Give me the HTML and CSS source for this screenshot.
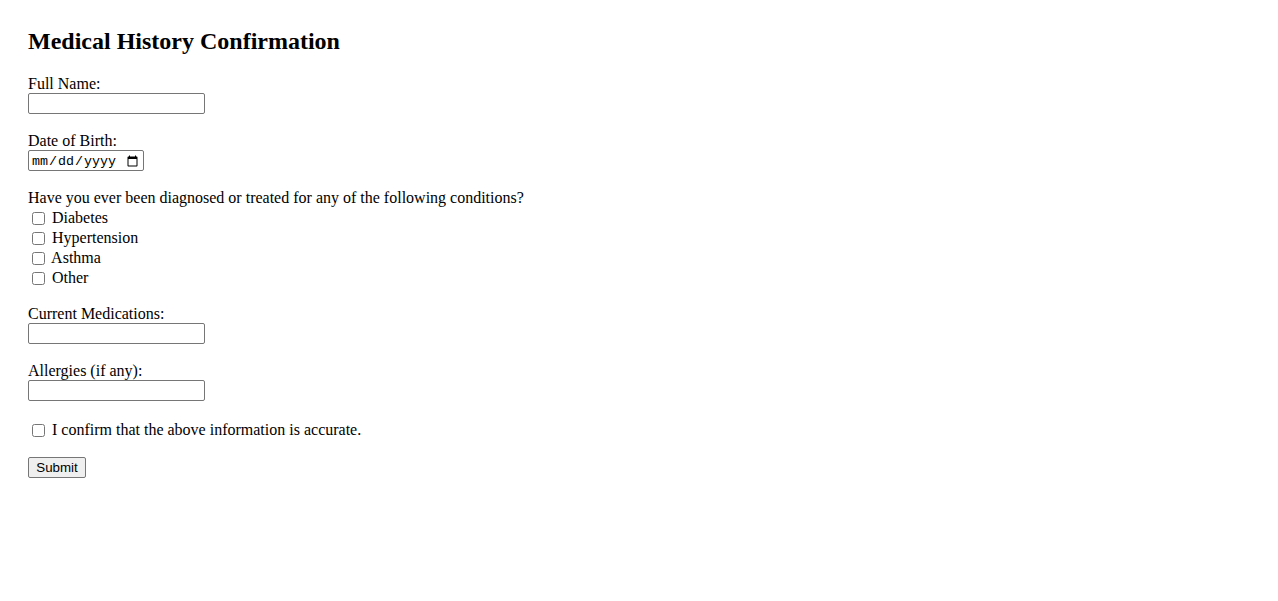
FILE: index.html
```html
<!DOCTYPE html>
<html lang="en">
<head>
    <meta charset="UTF-8">
    <meta name="viewport" content="width=device-width, initial-scale=1.0">
    <title>Medical History Confirmation</title>
    <link rel="stylesheet" href="styles.css">
</head>
<body>
    <h2>Medical History Confirmation</h2>
    <form class="history-form">
        <div class="form-group">
            <label for="full-name">Full Name:</label>
            <input type="text" id="full-name" class="text-input">
        </div>

        <div class="form-group">
            <label for="dob">Date of Birth:</label>
            <input type="date" id="dob" class="date-input">
        </div>

        <div class="form-group">
            <label>Have you ever been diagnosed or treated for any of the following conditions?</label>
            <label class="check-row"><input type="checkbox" name="conditions" value="diabetes"> Diabetes</label>
            <label class="check-row"><input type="checkbox" name="conditions" value="hypertension"> Hypertension</label>
            <label class="check-row"><input type="checkbox" name="conditions" value="asthma"> Asthma</label>
            <label class="check-row"><input type="checkbox" name="conditions" value="other"> Other</label>
        </div>

        <div class="form-group">
            <label for="medications">Current Medications:</label>
            <input type="text" id="medications" class="text-input">
        </div>

        <div class="form-group">
            <label for="allergies">Allergies (if any):</label>
            <input type="text" id="allergies" class="text-input">
        </div>

        <div class="form-group">
            <label class="check-row"><input type="checkbox" id="confirm"> I confirm that the above information is accurate.</label>
        </div>

        <button type="submit" class="submit-btn">Submit</button>
    </form>
</body>
</html>
```

FILE: styles.css
```css
body {
    font-family: "Liberation Serif", "Times New Roman", serif;
    font-size: 16px;
    color: #000;
    background: #fff;
    margin: 0;
    padding: 28px;
}

h2 {
    font-size: 24px;
    font-weight: bold;
    margin: 0 0 20px;
}

.form-group {
    display: flex;
    flex-direction: column;
    align-items: flex-start;
    margin-bottom: 18px;
}

.form-group label {
    display: block;
}

.check-row {
    display: block;
    height: 18px;
    padding-top: 2px;
}

.check-row input {
    width: 13px;
    height: 13px;
    margin: 3px 3px 3px 4px;
    vertical-align: -2px;
}

.text-input,
.date-input {
    box-sizing: border-box;
    height: 21px;
    border: 1px solid #767676;
    border-radius: 2px;
    padding: 1px 2px;
    font-family: "Liberation Mono", monospace;
    font-size: 13.333px;
    background: #fff;
}

.text-input {
    width: 177px;
}

.date-input {
    width: 116px;
    padding-top: 2px;
    padding-bottom: 0;
}

.submit-btn {
    box-sizing: border-box;
    height: 21px;
    width: 58px;
    padding: 1px 6px;
    font-family: "Liberation Sans", Arial, sans-serif;
    font-size: 13.333px;
    color: #000;
    background: #efefef;
    border: 1px solid #767676;
    border-radius: 2px;
}
```
